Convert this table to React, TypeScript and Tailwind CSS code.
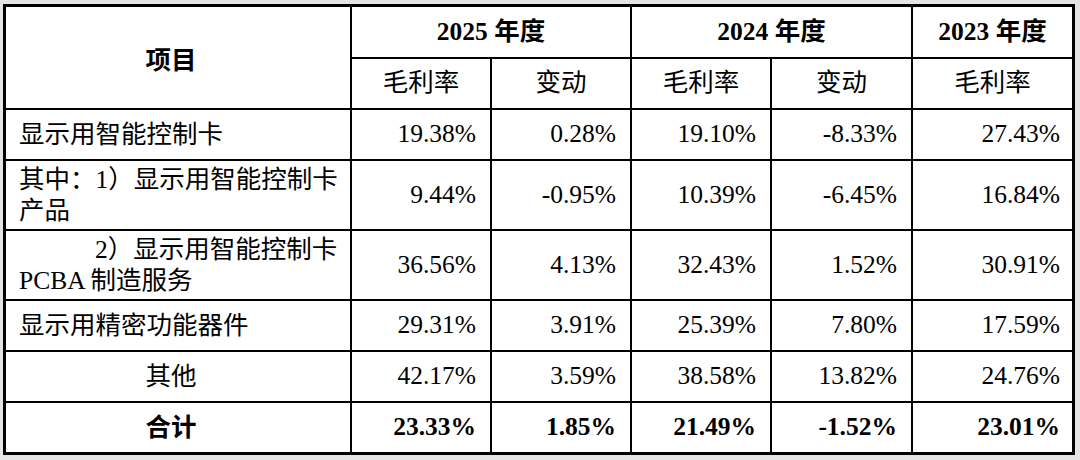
import React from 'react';

type Row = {
  label: React.ReactNode;
  align?: 'left' | 'center';
  values: string[];
  bold?: boolean;
};

const rows: Row[] = [
  { label: '显示用智能控制卡', values: ['19.38%', '0.28%', '19.10%', '-8.33%', '27.43%'] },
  {
    label: (
      <>
        其中：1）显示用智能控制卡
        <br />
        产品
      </>
    ),
    values: ['9.44%', '-0.95%', '10.39%', '-6.45%', '16.84%'],
  },
  {
    label: (
      <>
        <span className="pl-[76px]">2）显示用智能控制卡</span>
        <br />
        PCBA 制造服务
      </>
    ),
    values: ['36.56%', '4.13%', '32.43%', '1.52%', '30.91%'],
  },
  { label: '显示用精密功能器件', values: ['29.31%', '3.91%', '25.39%', '7.80%', '17.59%'] },
  { label: '其他', align: 'center', values: ['42.17%', '3.59%', '38.58%', '13.82%', '24.76%'] },
  { label: '合计', align: 'center', bold: true, values: ['23.33%', '1.85%', '21.49%', '-1.52%', '23.01%'] },
];

export default function App() {
  return (
    <div
      className="w-[1080px] h-[460px] bg-[#e4e4e4] pt-[4px] pl-[3px] text-black text-[25.5px]"
      style={{ fontFamily: '"Liberation Serif", "Noto Sans CJK SC", serif' }}
    >
      <div className="w-[1072px] border-[3px] border-black bg-white grid grid-cols-[346px_140px_140px_140px_141px_159px] grid-rows-[52px_51px_51px_70px_70px_51px_51px_49px]">
        {/* 表头 */}
        <div className="row-span-2 border-r-2 border-b-2 border-black flex items-center justify-center pr-[14px] pt-[8px] font-bold">
          项目
        </div>
        <div className="col-span-2 border-r-2 border-b-2 border-black flex items-center justify-center font-bold">
          2025 年度
        </div>
        <div className="col-span-2 border-r-2 border-b-2 border-black flex items-center justify-center font-bold">
          2024 年度
        </div>
        <div className="border-b-2 border-black flex items-center justify-center font-bold">
          2023 年度
        </div>
        {['毛利率', '变动', '毛利率', '变动', '毛利率'].map((t, i) => (
          <div
            key={i}
            className={`border-b-2 border-black flex items-center justify-center ${i < 4 ? 'border-r-2' : ''}`}
          >
            {t}
          </div>
        ))}

        {/* 数据行 */}
        {rows.map((r, ri) => {
          const last = ri === rows.length - 1;
          return (
            <React.Fragment key={ri}>
              <div
                className={`border-r-2 border-black flex items-center leading-[31px] ${
                  last ? '' : 'border-b-2'
                } ${r.align === 'center' ? 'justify-center pr-[14px]' : 'pl-[13px]'} ${r.bold ? 'font-bold' : ''}`}
              >
                <div>{r.label}</div>
              </div>
              {r.values.map((v, vi) => (
                <div
                  key={vi}
                  className={`border-black flex items-center justify-end ${last ? '' : 'border-b-2'} ${
                    vi < 4 ? 'border-r-2 pr-[14px]' : 'pr-[12px]'
                  } ${r.bold ? 'font-bold' : ''}`}
                >
                  {v}
                </div>
              ))}
            </React.Fragment>
          );
        })}
      </div>
    </div>
  );
}
